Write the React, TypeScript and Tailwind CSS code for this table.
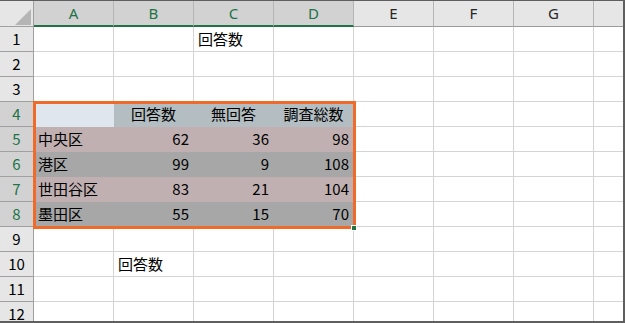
import React from 'react';

type Cell = { text?: string; align?: 'left' | 'right' | 'center'; fill?: string };

const COLS = ['A', 'B', 'C', 'D', 'E', 'F', 'G'];
const SELECTED_COLS = ['A', 'B', 'C', 'D'];
const SELECTED_ROWS = [4, 5, 6, 7, 8];

const PINK = 'bg-[#c1b0b2] border-[#c1b0b2]';
const GRAY = 'bg-[#a7a7a7] border-[#a7a7a7]';

const data: { name: string; answered: number; blank: number; total: number }[] = [
    { name: '中央区', answered: 62, blank: 36, total: 98 },
    { name: '港区', answered: 99, blank: 9, total: 108 },
    { name: '世田谷区', answered: 83, blank: 21, total: 104 },
    { name: '墨田区', answered: 55, blank: 15, total: 70 },
];

const buildRows = (): Cell[][] => {
    const rows: Cell[][] = Array.from({ length: 12 }, () => COLS.map(() => ({})));
    rows[0][2] = { text: '回答数', align: 'left' };
    rows[3][0] = { fill: 'bg-[#dfe6ee] border-[#dfe6ee]' };
    rows[3][1] = { text: '回答数', align: 'center', fill: 'bg-[#b4bdc1] border-[#b4bdc1]' };
    rows[3][2] = { text: '無回答', align: 'center', fill: 'bg-[#b4bdc1] border-[#b4bdc1]' };
    rows[3][3] = { text: '調査総数', align: 'center', fill: 'bg-[#b4bdc1] border-[#b4bdc1]' };
    data.forEach((d, i) => {
        const fill = i % 2 === 0 ? PINK : GRAY;
        rows[4 + i][0] = { text: d.name, align: 'left', fill };
        rows[4 + i][1] = { text: String(d.answered), align: 'right', fill };
        rows[4 + i][2] = { text: String(d.blank), align: 'right', fill };
        rows[4 + i][3] = { text: String(d.total), align: 'right', fill };
    });
    rows[9][1] = { text: '回答数', align: 'left' };
    return rows;
};

const alignClass = (a?: string) =>
    a === 'right' ? 'justify-end pr-[4px]' : a === 'center' ? 'justify-center' : 'justify-start pl-[4px]';

const App: React.FC = () => {
    const rows = buildRows();

    return (
        <div
            className="relative w-[625px] h-[323px] overflow-hidden bg-white border-t border-r-2 border-b-2 border-[#5f5f5f] text-[15px] text-black"
            style={{ fontFamily: '"Noto Sans CJK JP", "Noto Sans", sans-serif' }}
        >
            {/* column headers */}
            <div className="flex h-[26px]">
                <div className="relative w-[34px] shrink-0 bg-[#e6e6e6] border-r border-b border-[#a0a0a0]">
                    <svg className="absolute left-[15px] top-[8px]" width="16" height="16" viewBox="0 0 16 16">
                        <polygon points="16,0 16,16 0,16" fill="#b5b5b5" />
                    </svg>
                </div>
                {COLS.map((c) => {
                    const sel = SELECTED_COLS.includes(c);
                    return (
                        <div
                            key={c}
                            className={
                                sel
                                    ? 'w-[80px] shrink-0 flex items-center justify-center bg-[#d2d2d2] text-[#217346] border-r border-r-[#b5b5b5] border-b-2 border-b-[#217346] pt-[1px]'
                                    : 'w-[80px] shrink-0 flex items-center justify-center bg-[#e6e6e6] text-[#262626] border-r border-r-[#b5b5b5] border-b border-b-[#9b9b9b]'
                            }
                            style={{ fontFamily: '"Noto Sans", sans-serif' }}
                        >
                            {c}
                        </div>
                    );
                })}
                <div className="flex-1 bg-[#e6e6e6] border-b border-[#9b9b9b]" />
            </div>

            {/* rows */}
            {rows.map((cells, r) => {
                const n = r + 1;
                const sel = SELECTED_ROWS.includes(n);
                return (
                    <div key={n} className="flex h-[25px]">
                        <div
                            className={
                                sel
                                    ? 'w-[34px] shrink-0 flex items-center justify-center bg-[#d2d2d2] text-[#217346] border-r border-b border-[#a0a0a0]'
                                    : 'w-[34px] shrink-0 flex items-center justify-center bg-[#e6e6e6] text-black border-r border-b border-[#a0a0a0]'
                            }
                        >
                            {n}
                        </div>
                        {cells.map((cell, ci) => (
                            <div
                                key={ci}
                                className={`w-[80px] shrink-0 flex items-center whitespace-nowrap border-r border-b ${
                                    cell.fill ?? 'border-[#d4d4d4]'
                                } ${alignClass(cell.align)}`}
                            >
                                {cell.text}
                            </div>
                        ))}
                        <div className="flex-1 border-b border-[#d4d4d4]" />
                    </div>
                );
            })}

            {/* selection frame + fill handle */}
            <div className="absolute left-[33px] top-[100px] w-[323px] h-[128px] border-[3px] border-[#f06a2a] pointer-events-none" />
            <div className="absolute left-[351px] top-[224px] w-[6px] h-[6px] bg-[#217346] border border-white" />
        </div>
    );
};

export default App;
